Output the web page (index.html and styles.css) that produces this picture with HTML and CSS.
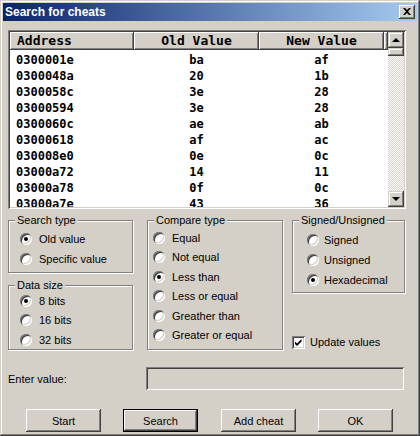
FILE: index.html
```html
<!DOCTYPE html>
<html>
<head>
<meta charset="utf-8">
<link rel="stylesheet" href="styles.css">
</head>
<body>
<div class="window">
  <div class="titlebar">
    <span class="title">Search for cheats</span>
    <div class="close"><svg width="8" height="7" viewBox="0 0 8 7"><path d="M0 0h2l2 2l2-2h2l-3 3.5l3 3.5h-2l-2-2l-2 2h-2l3-3.5z" fill="#000"/></svg></div>
  </div>
  <div class="body">
    <div class="list">
      <div class="list-main">
        <div class="list-header">
          <div class="hcell h-addr">Address</div>
          <div class="hcell h-val">Old Value</div>
          <div class="hcell h-val">New Value</div>
          <div class="hcell h-fill"></div>
        </div>
        <div class="rows">
          <div class="row"><span class="c-addr">0300001e</span><span class="c-val">ba</span><span class="c-val">af</span></div>
          <div class="row"><span class="c-addr">0300048a</span><span class="c-val">20</span><span class="c-val">1b</span></div>
          <div class="row"><span class="c-addr">0300058c</span><span class="c-val">3e</span><span class="c-val">28</span></div>
          <div class="row"><span class="c-addr">03000594</span><span class="c-val">3e</span><span class="c-val">28</span></div>
          <div class="row"><span class="c-addr">0300060c</span><span class="c-val">ae</span><span class="c-val">ab</span></div>
          <div class="row"><span class="c-addr">03000618</span><span class="c-val">af</span><span class="c-val">ac</span></div>
          <div class="row"><span class="c-addr">030008e0</span><span class="c-val">0e</span><span class="c-val">0c</span></div>
          <div class="row"><span class="c-addr">03000a72</span><span class="c-val">14</span><span class="c-val">11</span></div>
          <div class="row"><span class="c-addr">03000a78</span><span class="c-val">0f</span><span class="c-val">0c</span></div>
          <div class="row"><span class="c-addr">03000a7e</span><span class="c-val">43</span><span class="c-val">36</span></div>
        </div>
      </div>
      <div class="vscroll">
        <div class="sbtn"><svg width="16" height="16" viewBox="0 0 16 16"><path d="M4 10L8 6L12 10Z" fill="#000"/></svg></div>
        <div class="thumb"></div>
        <div class="track"></div>
        <div class="sbtn"><svg width="16" height="16" viewBox="0 0 16 16"><path d="M4 6L8 10L12 6Z" fill="#000"/></svg></div>
      </div>
    </div>

    <div class="options">
      <div class="col col1">
        <div class="group g-search">
          <span class="group-title">Search type</span>
          <div class="opt"><span class="radio on"></span>Old value</div>
          <div class="opt"><span class="radio"></span>Specific value</div>
        </div>
        <div class="group g-size">
          <span class="group-title">Data size</span>
          <div class="opt opt-s"><span class="radio on"></span>8 bits</div>
          <div class="opt opt-s"><span class="radio"></span>16 bits</div>
          <div class="opt opt-s"><span class="radio"></span>32 bits</div>
        </div>
      </div>
      <div class="col col2">
        <div class="group g-compare">
          <span class="group-title">Compare type</span>
          <div class="opt opt-s"><span class="radio"></span>Equal</div>
          <div class="opt opt-s"><span class="radio"></span>Not equal</div>
          <div class="opt opt-s"><span class="radio on"></span>Less than</div>
          <div class="opt opt-s"><span class="radio"></span>Less or equal</div>
          <div class="opt opt-s"><span class="radio"></span>Greather than</div>
          <div class="opt opt-s"><span class="radio"></span>Greater or equal</div>
        </div>
      </div>
      <div class="col col3">
        <div class="group g-signed">
          <span class="group-title">Signed/Unsigned</span>
          <div class="opt"><span class="radio"></span>Signed</div>
          <div class="opt"><span class="radio"></span>Unsigned</div>
          <div class="opt"><span class="radio on"></span>Hexadecimal</div>
        </div>
        <div class="opt check-row"><span class="checkbox"><svg width="9" height="9" viewBox="0 0 9 9"><path d="M1 3.5L3 5.5L7.5 1L7.5 3.5L3 8L1 6Z" fill="#000"/></svg></span>Update values</div>
      </div>
    </div>

    <div class="value-row">
      <span class="value-label">Enter value:</span>
      <div class="textbox"></div>
    </div>

    <div class="buttons">
      <div class="btn">Start</div>
      <div class="btn default">Search</div>
      <div class="btn">Add cheat</div>
      <div class="btn">OK</div>
    </div>
  </div>
</div>
</body>
</html>
```

FILE: styles.css
```css
html, body {
  margin: 0;
  padding: 0;
  background: #d4d0c8;
}

body {
  font-family: "Liberation Sans", Arial, sans-serif;
  font-size: 11px;
  color: #000;
}

.window {
  width: 420px;
  height: 436px;
  box-sizing: border-box;
  padding: 3px;
  background: #d4d0c8;
  box-shadow: inset -1px -1px #404040, inset 1px 1px #d4d0c8, inset -2px -2px #808080, inset 2px 2px #fff;
  display: flex;
  flex-direction: column;
}

.titlebar {
  height: 18px;
  flex: none;
  display: flex;
  align-items: center;
  padding: 0 2px;
  background: linear-gradient(to right, #0a246a, #a6caf0);
}

.title {
  flex: 1;
  color: #fff;
  font-weight: bold;
  font-size: 12px;
}

.close {
  width: 16px;
  height: 14px;
  box-sizing: border-box;
  background: #d4d0c8;
  box-shadow: inset -1px -1px #404040, inset 1px 1px #fff, inset -2px -2px #808080, inset 2px 2px #d4d0c8;
  display: flex;
  align-items: center;
  justify-content: center;
  padding-bottom: 1px;
}

.body {
  padding: 9px 0 0 5px;
}

/* list view */
.list {
  width: 398px;
  height: 179px;
  box-sizing: border-box;
  padding: 2px;
  background: #fff;
  box-shadow: inset 1px 1px #808080, inset -1px -1px #fff, inset 2px 2px #404040, inset -2px -2px #d4d0c8;
  display: flex;
}

.list-main {
  width: 378px;
  overflow: hidden;
  display: flex;
  flex-direction: column;
}

.list-header {
  display: flex;
  height: 18px;
  flex: none;
}

.hcell {
  box-sizing: border-box;
  height: 18px;
  background: #d4d0c8;
  box-shadow: inset -1px -1px #404040, inset 1px 1px #fff, inset -2px -2px #808080;
  font-family: "DejaVu Sans Mono", monospace;
  font-weight: bold;
  font-size: 13px;
  line-height: 18px;
  text-align: center;
  white-space: nowrap;
}

.h-addr {
  width: 124px;
  text-align: left;
  padding-left: 7px;
}

.h-val {
  width: 125px;
}

.h-fill {
  width: 4px;
}

.rows {
  flex: 1;
  overflow: hidden;
  padding-top: 2px;
}

.row {
  display: flex;
  height: 16px;
  font-family: "DejaVu Sans Mono", monospace;
  font-weight: bold;
  font-size: 12px;
  line-height: 16px;
}

.c-addr {
  width: 124px;
  box-sizing: border-box;
  padding-left: 6px;
}

.c-val {
  width: 125px;
  text-align: center;
}

.vscroll {
  width: 16px;
  display: flex;
  flex-direction: column;
  background: repeating-conic-gradient(#d4d0c8 0 25%, #fff 0 50%) 0 0 / 2px 2px;
}

.sbtn {
  width: 16px;
  height: 16px;
  flex: none;
  background: #d4d0c8;
  box-shadow: inset -1px -1px #404040, inset 1px 1px #d4d0c8, inset -2px -2px #808080, inset 2px 2px #fff;
}

.sbtn svg {
  display: block;
}

.thumb {
  height: 8px;
  flex: none;
  background: #d4d0c8;
  box-shadow: inset -1px -1px #404040, inset 1px 1px #d4d0c8, inset -2px -2px #808080, inset 2px 2px #fff;
}

.track {
  flex: 1;
}

/* option groups */
.options {
  display: flex;
  align-items: flex-start;
  margin-top: 11px;
}

.col1 {
  width: 125px;
}

.col2 {
  width: 136px;
  margin-left: 14px;
}

.col3 {
  width: 113px;
  margin-left: 9px;
}

.group {
  position: relative;
  box-sizing: border-box;
  border: 1px solid #808080;
  box-shadow: inset 1px 1px #fff, 1px 1px #fff;
}

.group-title {
  position: absolute;
  top: -7px;
  left: 6px;
  padding: 0 2px;
  line-height: 13px;
  background: #d4d0c8;
  white-space: nowrap;
}

.opt {
  display: flex;
  align-items: center;
  height: 20px;
  white-space: nowrap;
}

.opt-s {
  height: 19.5px;
}

.radio {
  position: relative;
  flex: none;
  width: 12px;
  height: 12px;
  margin-right: 7px;
  border-radius: 50%;
  background: #fff;
  box-shadow: inset 1px 1px #808080, inset -1px -1px #fff, inset 2px 2px #404040, inset -2px -2px #d4d0c8;
}

.radio.on::after {
  content: "";
  position: absolute;
  left: 4px;
  top: 4px;
  width: 4px;
  height: 4px;
  border-radius: 50%;
  background: #000;
}

.g-search {
  height: 53px;
  padding: 8px 0 0 11px;
}

.g-size {
  height: 65px;
  margin-top: 12px;
  padding: 5px 0 0 11px;
}

.g-compare {
  height: 130px;
  padding: 7px 0 0 5px;
}

.g-signed {
  height: 73px;
  padding: 9px 0 0 14px;
}

.g-signed .radio {
  margin-right: 5px;
}

.check-row {
  margin-top: 39px;
}

.checkbox {
  flex: none;
  width: 13px;
  height: 13px;
  box-sizing: border-box;
  margin-right: 5px;
  background: #fff;
  box-shadow: inset 1px 1px #808080, inset -1px -1px #fff, inset 2px 2px #404040, inset -2px -2px #d4d0c8;
  display: flex;
  align-items: center;
  justify-content: center;
}

.checkbox svg {
  display: block;
}

/* value row */
.value-row {
  display: flex;
  align-items: center;
  height: 23px;
  margin-top: 15px;
}

.value-label {
  width: 138px;
  flex: none;
}

.textbox {
  width: 258px;
  height: 23px;
  box-sizing: border-box;
  background: #d4d0c8;
  box-shadow: inset 1px 1px #808080, inset -1px -1px #fff, inset 2px 2px #404040, inset -2px -2px #d4d0c8;
}

/* buttons */
.buttons {
  display: flex;
  margin-top: 19px;
  padding-left: 18px;
}

.btn {
  width: 75px;
  height: 23px;
  box-sizing: border-box;
  display: flex;
  align-items: center;
  justify-content: center;
  background: #d4d0c8;
  box-shadow: inset -1px -1px #404040, inset 1px 1px #fff, inset -2px -2px #808080, inset 2px 2px #d4d0c8;
}

.btn + .btn {
  margin-left: 22px;
}

.btn.default {
  margin-left: 22px;
  border: 1px solid #000;
}

.btn.default + .btn {
  margin-left: 23px;
}

.btn:last-child {
  margin-left: 22px;
}
```
